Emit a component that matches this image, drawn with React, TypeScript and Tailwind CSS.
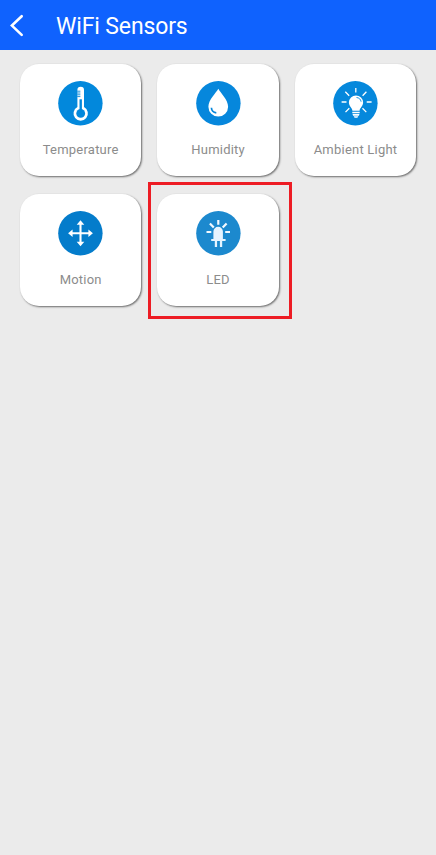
import type { ReactNode } from "react";

function Disc({ color, children }: { color: string; children: ReactNode }) {
  return (
    <svg className="h-[45px] w-[45px] shrink-0" viewBox="0 0 45 45" fill="none">
      <circle cx="22.4" cy="22.3" r="22.2" fill={color} />
      {children}
    </svg>
  );
}

const Thermometer = () => (
  <Disc color="#0288dc">
    <path d="M19.4 9a3.3 3.3 0 0 1 6.6 0v17.1a7.2 7.2 0 1 1-6.6 0Z" fill="#fff" />
    <circle cx="22.7" cy="32.4" r="4.4" fill="#0288dc" />
    <path d="M22.7 18.3v12" stroke="#0288dc" strokeWidth="2.4" />
    <path d="M19.2 10.2h3.2M19.2 12h3.2M19.2 13.8h3.2M19.2 15.6h3.2" stroke="#0288dc" strokeWidth=".9" />
  </Disc>
);

const Drop = () => (
  <Disc color="#0687dc">
    <path d="M22.3 7.7c2.2 4.2 9.8 11 9.8 18a9.8 9.8 0 0 1-19.7 0c0-7 7.7-13.8 9.9-18Z" fill="#fff" />
    <path d="M15.4 26.8c.2 3 2 4.7 4.9 5" stroke="#0687dc" strokeWidth="1.7" />
  </Disc>
);

const Bulb = () => (
  <Disc color="#0588dc">
    <path
      d="M22.8 6.9v4.6M8.6 21h4.9M33.7 21h4.9M12.3 10.7l3.9 4M33.4 10.7l-3.8 4M12.5 31.1l3.8-3.8M33.3 31.1l-3.8-3.8"
      stroke="#fff"
      strokeWidth="1.3"
    />
    <path d="M19.4 29.8c0-2.8-3.5-4.4-3.5-8.3a7.1 7.1 0 0 1 14.2 0c0 3.9-3.5 5.5-3.5 8.3Z" fill="#fff" />
    <path d="M19.3 30.7h7.4v1.6h-7.4ZM19.5 33h7l-.6 1.7h-5.8ZM20.7 35.2h4.6l-.9 1.6h-2.8Z" fill="#fff" />
    <path d="M23.5 16.5c2.5.2 4.2 1.7 4.6 4.2" stroke="#0588dc" strokeWidth=".9" />
  </Disc>
);

const Arrows = () => (
  <Disc color="#047ccb">
    <path d="M22.5 12v20.5M12.5 22.3h20" stroke="#fff" strokeWidth="2.1" />
    <path
      d="m22.5 9.2 3.8 4.5h-7.6ZM22.5 35.3l3.8-4.5h-7.6ZM10.1 22.3l4.5-3.7V26ZM34.9 22.3l-4.5-3.7V26Z"
      fill="#fff"
    />
  </Disc>
);

const Led = () => (
  <Disc color="#1c89ce">
    <path
      d="M22.3 9.1v4.7M10.5 21h4.8M29.2 21H34M13.9 12.5l3.9 4.1M30.6 12.5l-3.9 4.1"
      stroke="#f2f9ff"
      strokeWidth="2.2"
    />
    <path d="M17.4 20.5a4.75 4.75 0 0 1 9.5 0v7.4h2.7v2.2h-3.4v6h-2.3v-6h-2.8v6h-2.3v-6h-3.6v-2.2h2.2Z" fill="#e6f4ff" />
  </Disc>
);

function Card({ label, icon }: { label: string; icon: ReactNode }) {
  return (
    <button className="flex h-[112px] w-full flex-col items-center rounded-[19px] bg-white pt-[17px] shadow-[1px_1px_2px_rgba(0,0,0,0.55)]">
      {icon}
      <span className="mt-[14px] whitespace-nowrap text-[13px] leading-5 tracking-[0.22px] text-[#8c8c8c]">{label}</span>
    </button>
  );
}

export default function App() {
  return (
    <div className="min-h-[855px] w-full bg-[#ebebeb] font-[Roboto,sans-serif]">
      <header className="flex h-[50px] items-center bg-[#0f62fe] text-white">
        <svg className="ml-2 h-6 w-4" viewBox="0 0 16 24" fill="none">
          <path d="M13.7 3.2 3.9 12.6l9.8 9.3" stroke="currentColor" strokeWidth="2.6" strokeLinecap="round" />
        </svg>
        <h1 className="ml-8 pt-0.5 text-[23px] leading-none tracking-[-0.14px]">WiFi Sensors</h1>
      </header>
      <main className="grid grid-cols-[repeat(3,121.4px)] gap-x-[16px] gap-y-[17.7px] pl-5 pt-[14.3px]">
        <Card label="Temperature" icon={<Thermometer />} />
        <Card label="Humidity" icon={<Drop />} />
        <Card label="Ambient Light" icon={<Bulb />} />
        <Card label="Motion" icon={<Arrows />} />
        <div className="relative">
          <Card label="LED" icon={<Led />} />
          <div className="pointer-events-none absolute -left-[9.4px] -top-[12px] h-[137px] w-[144px] border-3 border-[#ed1c24]" />
        </div>
      </main>
    </div>
  );
}
